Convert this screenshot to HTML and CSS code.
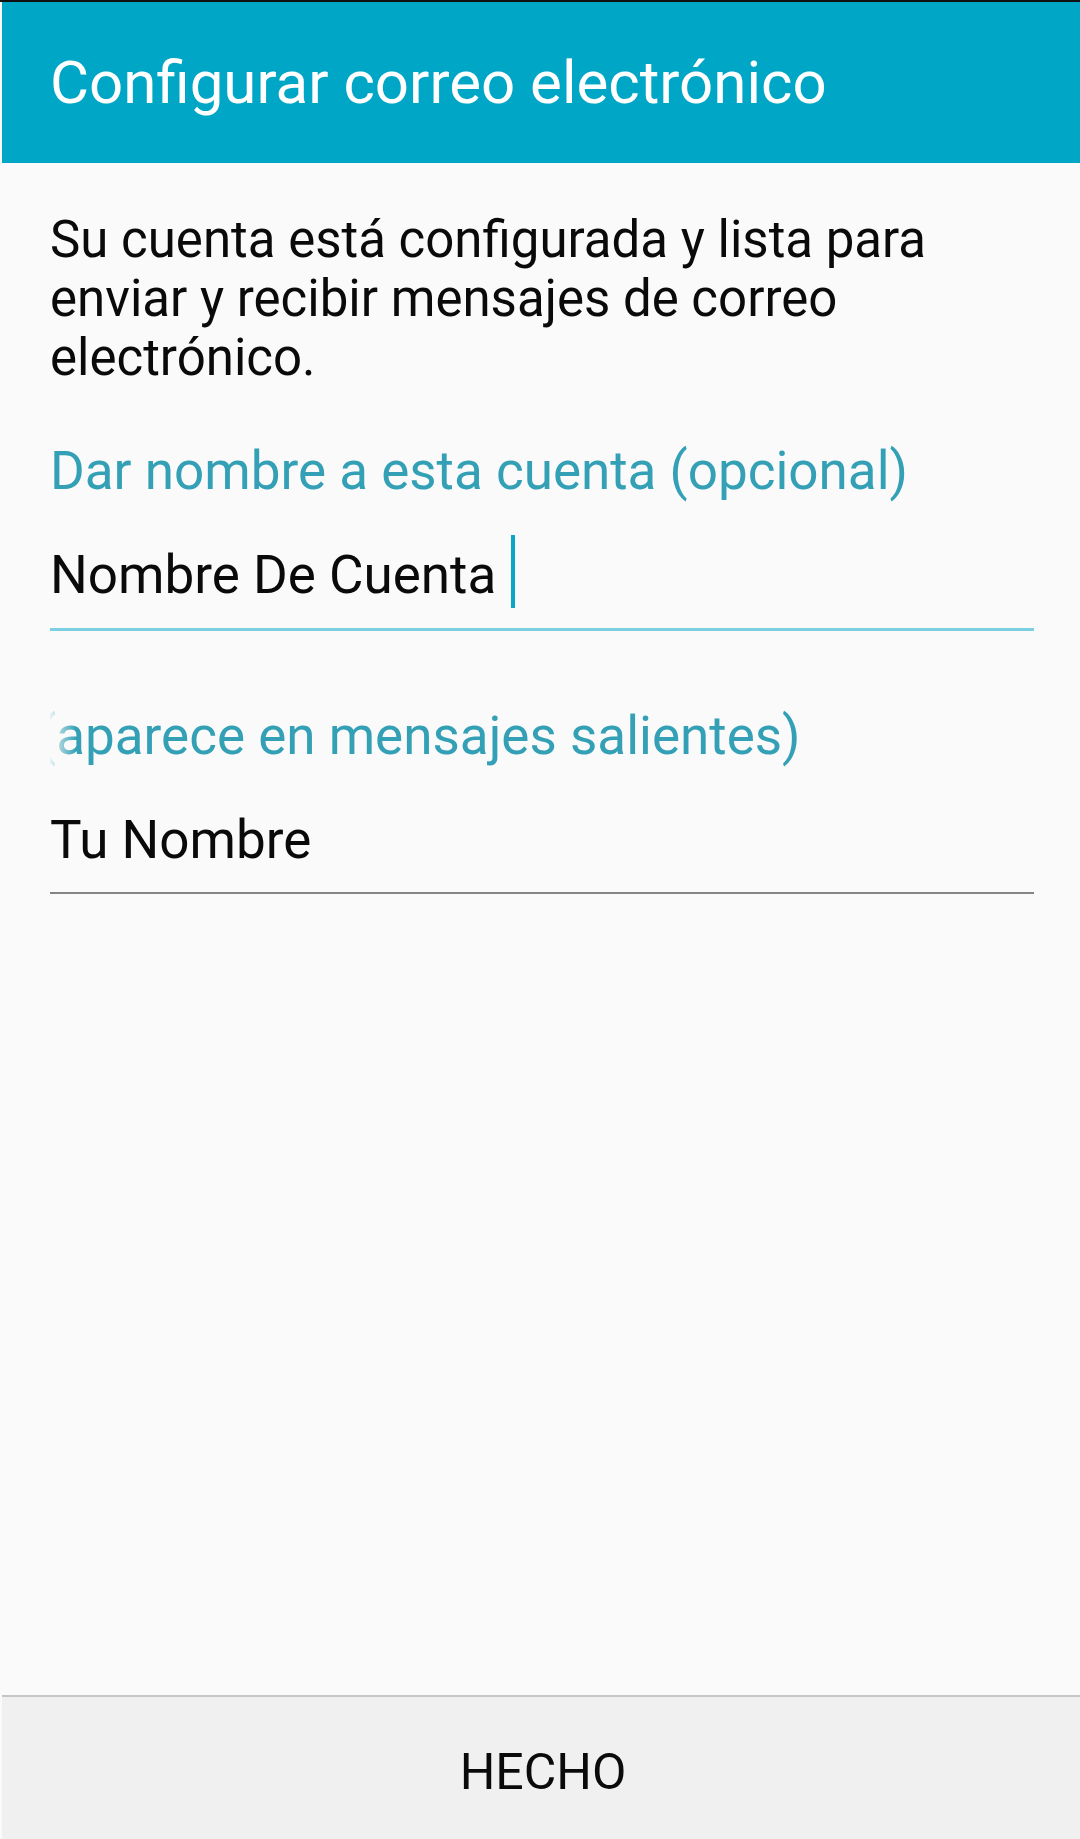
FILE: index.html
```html
<!DOCTYPE html>
<html lang="es">
<head>
<meta charset="utf-8">
<title>Configurar correo electrónico</title>
<link rel="stylesheet" href="styles.css">
</head>
<body>
<div class="topline"></div>
<div class="page">
  <header class="appbar">
    <h1 class="title">Configurar correo electrónico</h1>
  </header>
  <main class="content">
    <p class="intro">Su cuenta está configurada y lista para enviar y recibir mensajes de correo electrónico.</p>
    <div class="field field-active">
      <div class="label">Dar nombre a esta cuenta (opcional)</div>
      <div class="input">Nombre De Cuenta<span class="caret"></span></div>
    </div>
    <div class="field field-idle">
      <div class="label label-scrolled"><span class="scroll">(aparece en mensajes salientes)</span></div>
      <div class="input">Tu Nombre</div>
    </div>
  </main>
  <footer class="bottombar">
    <div class="done">HECHO</div>
  </footer>
</div>
</body>
</html>
```

FILE: styles.css
```css
html, body {
  margin: 0;
  padding: 0;
}
body {
  width: 1080px;
  height: 1839px;
  background: #fafafa;
  font-family: Roboto, "Noto Sans", "Liberation Sans", sans-serif;
  display: flex;
  flex-direction: column;
  overflow: hidden;
}
.topline {
  height: 2px;
  background: #111;
  flex: none;
}
.page {
  flex: 1;
  margin-left: 2px;
  display: flex;
  flex-direction: column;
  min-height: 0;
}
.appbar {
  flex: none;
  background: #00a6c6;
  padding: 46px 46px 45px 48px;
}
.title {
  margin: 0;
  font-weight: 400;
  font-size: 60px;
  line-height: 70px;
  color: #ffffff;
  white-space: nowrap;
}
.content {
  flex: 1;
  padding: 47px 46px 0 48px;
}
.intro {
  margin: 0;
  font-size: 51px;
  line-height: 59px;
  color: #0a0a0a;
}
.field {
  display: flex;
  flex-direction: column;
  gap: 42px;
  padding-bottom: 21px;
}
.field-active {
  margin-top: 53px;
  border-bottom: 3px solid #7ccfe0;
}
.field-idle {
  margin-top: 74px;
  border-bottom: 2px solid #858585;
}
.label {
  font-size: 53px;
  line-height: 62px;
  color: #33a0b6;
  white-space: nowrap;
}
.label-scrolled {
  overflow: hidden;
  -webkit-mask-image: linear-gradient(to right, rgba(0,0,0,0.08) 0, #000 26px);
  mask-image: linear-gradient(to right, rgba(0,0,0,0.08) 0, #000 26px);
}
.scroll {
  display: inline-block;
  margin-left: -12px;
}
.input {
  font-size: 53px;
  line-height: 62px;
  color: #0a0a0a;
  white-space: nowrap;
}
.caret {
  display: inline-block;
  width: 4px;
  height: 73px;
  background: #0aa6c8;
  margin-left: 15px;
  margin-top: -10px;
  margin-bottom: -1px;
  vertical-align: -14px;
}
.bottombar {
  flex: none;
  height: 134px;
  padding-top: 8px;
  border-top: 2px solid #c6c6c6;
  background: #f0f0f0;
  display: flex;
  justify-content: center;
}
.done {
  font-size: 50px;
  line-height: 134px;
  color: #0a0a0a;
  margin-left: 4px;
}
```
